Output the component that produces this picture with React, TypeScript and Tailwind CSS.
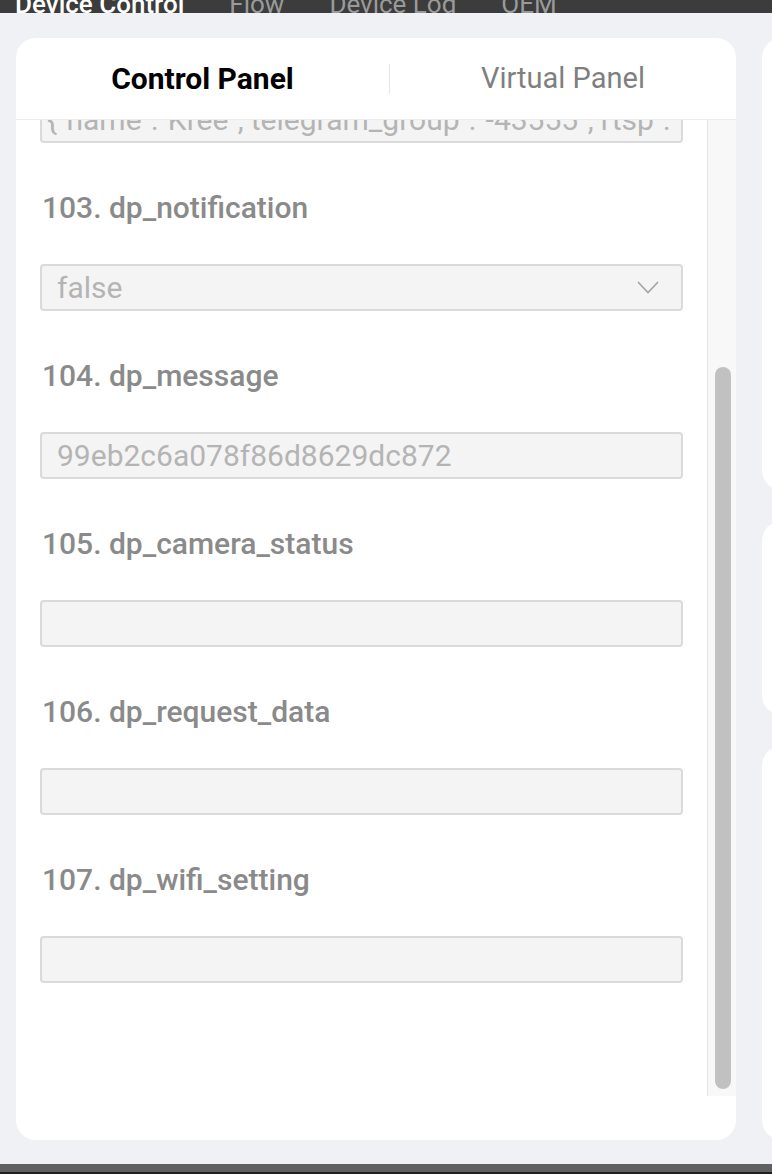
const fields = [
  { label: '103. dp_notification', value: 'false', select: true },
  { label: '104. dp_message', value: '99eb2c6a078f86d8629dc872' },
  { label: '105. dp_camera_status', value: '' },
  { label: '106. dp_request_data', value: '' },
  { label: '107. dp_wifi_setting', value: '' },
];

function Field({ label, value, select }: { label: string; value: string; select?: boolean }) {
  return (
    <div className="pt-[47px]">
      <div className="h-[36px] leading-[36px] pl-[2px] text-[30px] font-medium text-[#8a8a8a]">{label}</div>
      <div className="mt-[38px] h-[47px] rounded-[4px] border-2 border-[#dadada] bg-[#f4f4f4] flex items-center justify-between pl-[15px] pr-[22px]">
        <span className="text-[30px] text-[#b4b4b4]">{value}</span>
        {select && (
          <svg width="22" height="13" viewBox="0 0 22 13" fill="none">
            <path d="M1 1l10 10.5L21 1" stroke="#a3a3a3" strokeWidth="1.6" />
          </svg>
        )}
      </div>
    </div>
  );
}

export default function App() {
  return (
    <div
      className="w-[772px] h-[1174px] overflow-hidden flex flex-col bg-[#f0f1f5]"
      style={{ fontFamily: 'Roboto, "Noto Sans", sans-serif' }}
    >
      <div className="h-[13px] bg-[#3b3c3b] overflow-hidden flex gap-[45px] pl-[15px] items-end">
        <span className="text-[26px] leading-[30px] mb-[-6px] font-medium text-white whitespace-nowrap">Device Control</span>
        <span className="text-[26px] leading-[30px] mb-[-6px] text-[#9a9a9a] whitespace-nowrap">Flow</span>
        <span className="text-[26px] leading-[30px] mb-[-6px] text-[#9a9a9a] whitespace-nowrap">Device Log</span>
        <span className="text-[26px] leading-[30px] mb-[-6px] text-[#9a9a9a] whitespace-nowrap">OEM</span>
      </div>

      <div className="flex-1 flex gap-[26px] pl-4 pt-[25px] pb-[24px] min-h-0">
        <div className="w-[720px] shrink-0 bg-white rounded-[20px] flex flex-col overflow-hidden">
          <div className="h-[82px] shrink-0 flex items-center border-b border-[#ededed]">
            <div className="w-[373px] text-center text-[30px] font-bold text-black">Control Panel</div>
            <div className="w-px h-[30px] bg-[#e6e6e6]" />
            <div className="flex-1 text-center text-[29px] text-[#7f7f7f]">Virtual Panel</div>
          </div>

          <div className="h-[976px] flex">
            <div className="flex-1 overflow-hidden pl-6 pr-6">
              <div className="-mt-[24px]">
                <div className="h-[47px] rounded-[4px] border-2 border-[#dadada] bg-[#f4f4f4] flex items-center pl-[5px] overflow-hidden">
                  <span className="text-[30px] text-[#b4b4b4] whitespace-nowrap">
                    {'{"name":"Kree","telegram_group":"-43555","rtsp":"rtsp://'}
                  </span>
                </div>
                {fields.map((f) => (
                  <Field key={f.label} {...f} />
                ))}
              </div>
            </div>
            <div className="w-[29px] bg-[#f8f8f8] border-l border-[#e4e4e4] flex flex-col pl-[7px] pr-[5px] pt-[247px] pb-[7px]">
              <div className="flex-1 rounded-full bg-[#c1c1c1]" />
            </div>
          </div>
        </div>

        <div className="w-[300px] shrink-0 flex flex-col gap-[31px]">
          <div className="h-[452px] bg-white rounded-[20px]" />
          <div className="h-[194px] bg-white rounded-[20px]" />
          <div className="flex-1 bg-white rounded-[20px]" />
        </div>
      </div>

      <div className="h-[10px] bg-[#606060] border-b-2 border-[#1f1f1f]" />
    </div>
  );
}
